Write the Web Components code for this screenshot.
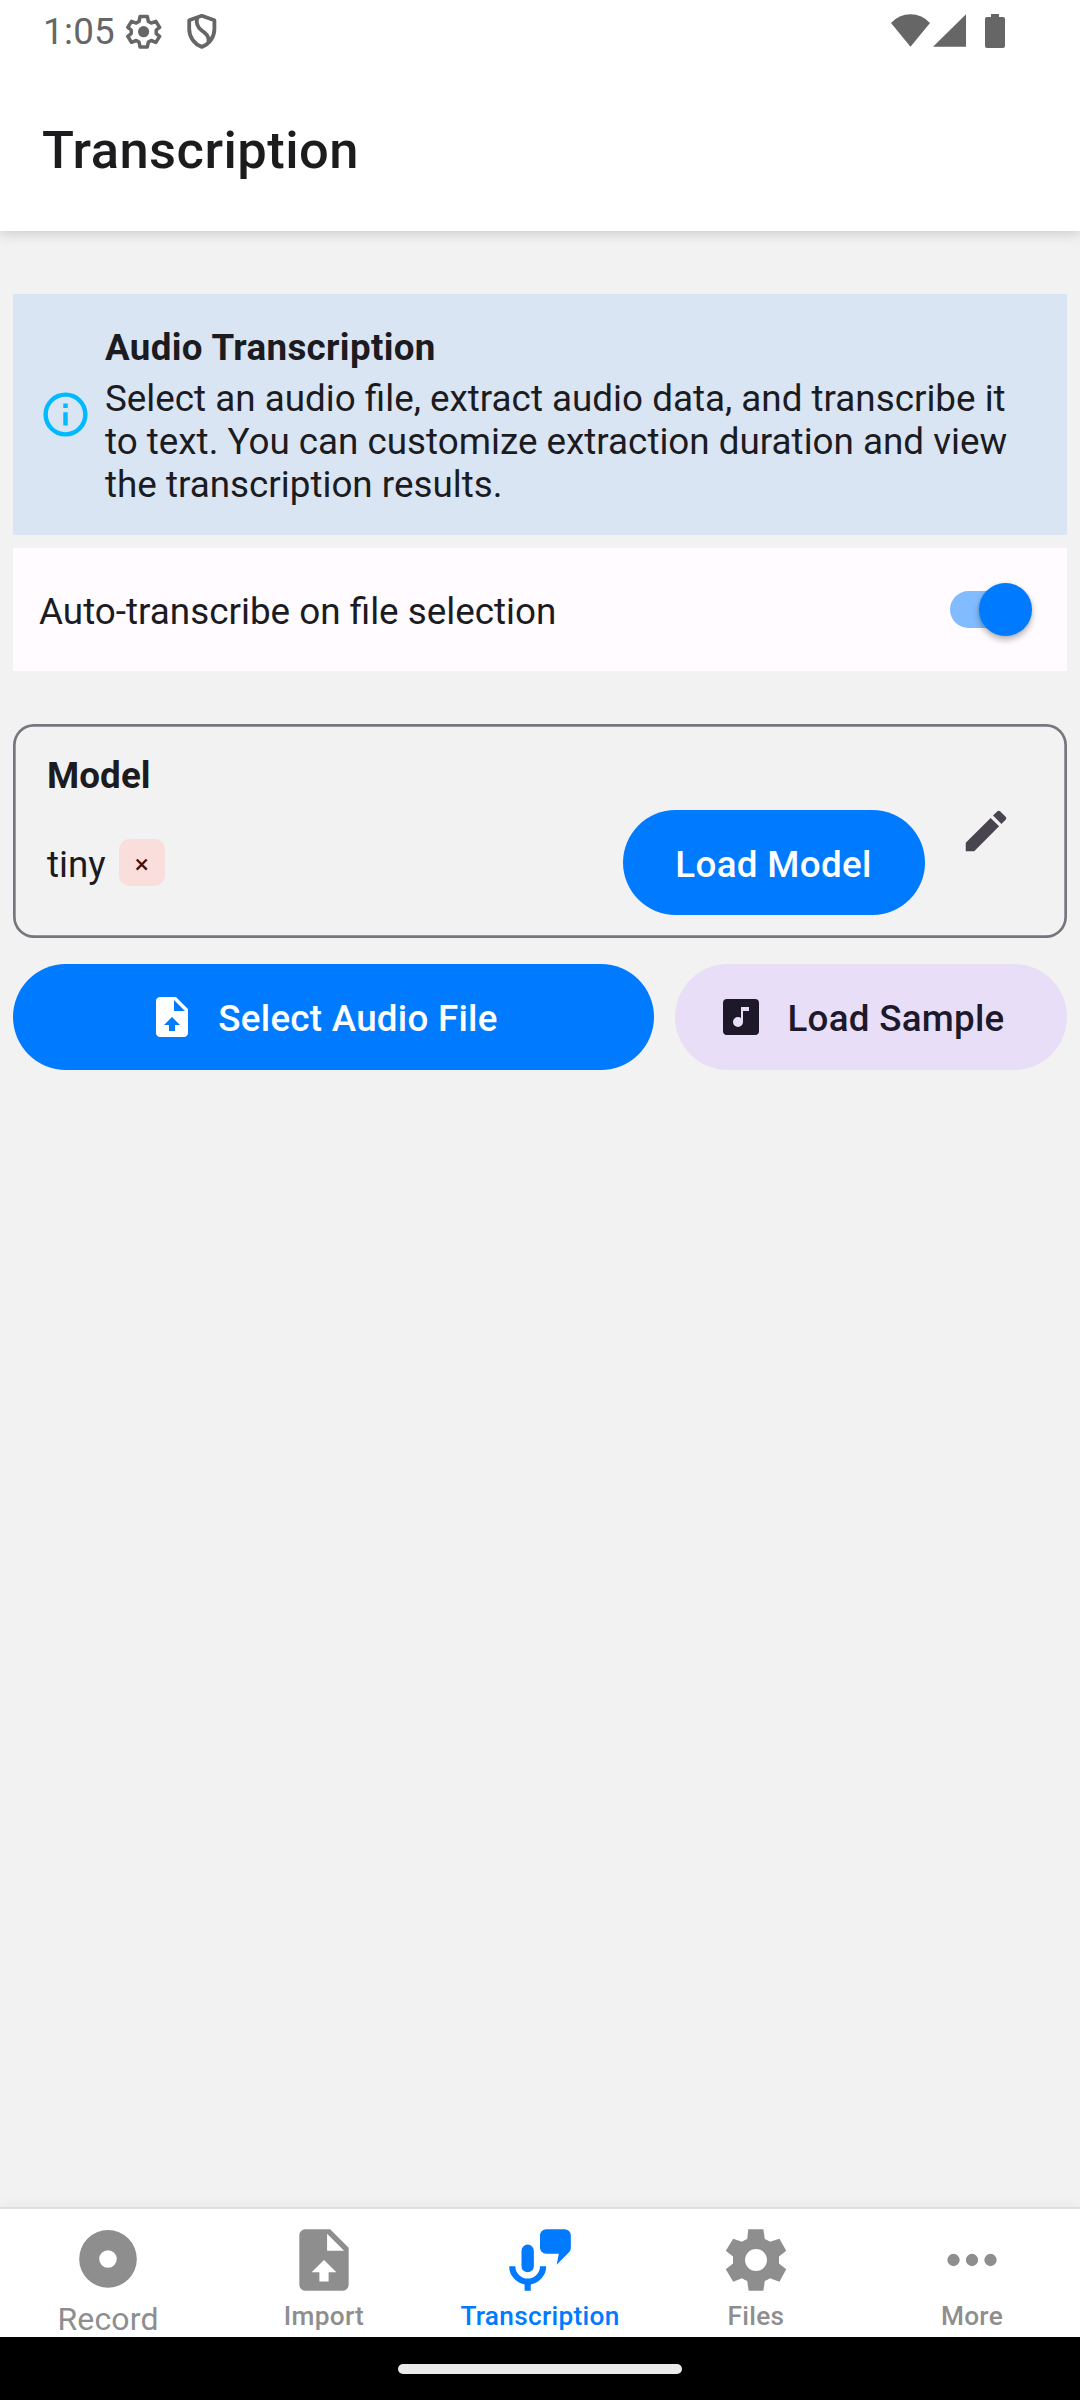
<!DOCTYPE html>
<html lang="en">
<head>
<meta charset="utf-8">
<title>Transcription</title>
<style>
  html, body { margin: 0; padding: 0; }
  body { width: 1080px; height: 2400px; overflow: hidden; background: #f2f2f2; font-family: Roboto, sans-serif; color: #1c1b1f; }
</style>
</head>
<body>
<transcription-app></transcription-app>
<script>
const define = (name, css, html) => customElements.define(name, class extends HTMLElement {
  constructor() {
    super();
    const t = document.createElement('template');
    t.innerHTML = `<style>*{box-sizing:border-box}${css}</style>${html}`;
    this.attachShadow({ mode: 'open' }).append(t.content.cloneNode(true));
  }
});

const GEAR = 'M9.5 2H14.4L14.85 5.2Q15.75 5.6 16.55 6.1L19.6 5.1L21.8 9L19.45 10.85V13.15L21.8 15L19.6 19.05L16.55 17.9Q15.75 18.5 14.85 18.8L14.4 22H9.6L9.15 18.8Q8.25 18.5 7.45 17.9L4.6 19.05L2.2 15L4.55 13.15V10.85L2.2 9L4.6 5.1L7.45 6.1Q8.25 5.6 9.15 5.2ZM12 8.45A3.55 3.55 0 1 0 12 15.55A3.55 3.55 0 1 0 12 8.45Z';
const ICONS = {
  info: 'M11 9H13V7H11M12 20C7.59 20 4 16.41 4 12S7.59 4 12 4 20 7.59 20 12 16.41 20 12 20M12 2A10 10 0 0 0 2 12A10 10 0 0 0 12 22A10 10 0 0 0 22 12A10 10 0 0 0 12 2M11 17H13V11H11V17Z',
  pencil: 'M20.71 7.04C21.1 6.65 21.1 6 20.71 5.63L18.37 3.29C18 2.9 17.35 2.9 16.96 3.29L15.12 5.12L18.87 8.87M3 17.25V21H6.75L17.81 9.93L14.06 6.18L3 17.25Z',
  upload: 'M14 2H6C4.89 2 4 2.89 4 4V20C4 21.11 4.89 22 6 22H18C19.11 22 20 21.11 20 20V8L14 2M13.5 16V19H10.5V16H8L12 12L16 16H13.5M13 9V3.5L18.5 9H13Z',
  music: 'M16 9H13V14.5A2.5 2.5 0 0 1 10.5 17A2.5 2.5 0 0 1 8 14.5A2.5 2.5 0 0 1 10.5 12C11.07 12 11.58 12.19 12 12.5V7H16M19 3H5A2 2 0 0 0 3 5V19A2 2 0 0 0 5 21H19A2 2 0 0 0 21 19V5A2 2 0 0 0 19 3Z',
  record: 'M12 2.3A9.35 9.35 0 1 0 12 21A9.35 9.35 0 1 0 12 2.3ZM12 8.8A2.85 2.85 0 1 1 12 14.5A2.85 2.85 0 1 1 12 8.8Z',
  mic: 'M8 7A2 2 0 0 1 10 9V14A2 2 0 0 1 6 14V9A2 2 0 0 1 8 7M14 14A6 6 0 0 1 9 19.92V22H7V19.92A6 6 0 0 1 2 14H4A4 4 0 0 0 12 14H14M20 2H14A2 2 0 0 0 12 4V8A2 2 0 0 0 14 10H18.1L17.4 13.5L21.4 9.45C21.8 9.1 22 8.6 22 8V4A2 2 0 0 0 20 2Z',
  gear: GEAR,
  dots: 'M16 12A2 2 0 0 1 18 10A2 2 0 0 1 20 12A2 2 0 0 1 18 14A2 2 0 0 1 16 12M10 12A2 2 0 0 1 12 10A2 2 0 0 1 14 12A2 2 0 0 1 12 14A2 2 0 0 1 10 12M4 12A2 2 0 0 1 6 10A2 2 0 0 1 8 12A2 2 0 0 1 6 14A2 2 0 0 1 4 12Z'
};
customElements.define('app-icon', class extends HTMLElement {
  connectedCallback() {
    const s = this.getAttribute('size');
    this.attachShadow({ mode: 'open' }).innerHTML =
      `<style>:host{display:block;flex:none;width:${s}px;height:${s}px}svg{display:block}</style>
       <svg width="${s}" height="${s}" viewBox="0 0 24 24" fill="currentColor" fill-rule="evenodd"><path d="${ICONS[this.getAttribute('name')]}"/></svg>`;
  }
});

define('status-bar', `
  :host{display:flex;height:62px;padding:0 0 0 43px;background:#fff;color:#666;font-size:36.75px;line-height:64px}
  .time{width:83px;letter-spacing:.3px}
  svg{display:block}
  .spacer{flex:1}
`, `
  <span class="time">1:05</span>
  <svg width="100" height="62" viewBox="0 0 100 62" fill="none" stroke="#666" stroke-width="3.5" stroke-linejoin="round">
    <path d="M14.1 16.5h7.2l1.1 5 2.8 1.6 4.7-1.8 3.7 6-3.4 2.7v3.6l3.4 2.7-3.7 6-4.7-1.8-2.8 1.6-1.1 4.9h-7.2l-1.1-4.9-2.8-1.6-4.7 1.8-3.7-6 3.4-2.7v-3.6l-3.4-2.7 3.7-6 4.7 1.8 2.8-1.6z"/>
    <circle cx="17.6" cy="31.7" r="5.6" fill="#666" stroke="none"/>
    <path stroke-width="3.8" d="M75.8 15.8L88.4 20.3V29C88.4 37 83.5 44 75.8 46.9C68.1 44 63.2 37 63.2 29V20.3Z"/>
    <path stroke-width="3.8" d="M71.2 18C69.8 23.5 71.5 27.2 75.5 30.3C81 34.5 83.5 37 82.4 42"/>
  </svg>
  <span class="spacer"></span>
  <svg width="190" height="62" viewBox="890 0 190 62" fill="#666">
    <path d="M891 23Q899 14.3 910.5 14.3T930 23L910.5 46.7Z"/>
    <path d="M966 14.2V46.7H933Z"/>
    <path d="M991 14h8v3h4a2 2 0 0 1 2 2v27a2 2 0 0 1-2 2h-16a2 2 0 0 1-2-2V19a2 2 0 0 1 2-2h4z"/>
  </svg>
`);

define('app-header', `
  :host{display:flex;align-items:center;height:169px;padding:6px 42px 0;background:#fff;font-size:52.5px;font-weight:500;line-height:62px;letter-spacing:.45px;color:#1c1c1e}
`, `<slot></slot>`);

define('info-card', `
  :host{display:flex;align-items:center;height:241px;padding:0 26px;background:#d9e5f3;gap:13px}
  app-icon{color:#00baff}
  .title{font-size:36.75px;font-weight:700;line-height:54px;letter-spacing:.33px;margin-bottom:2px;white-space:nowrap}
  .body{font-size:36.8px;line-height:43px;white-space:nowrap}
  .col{margin-top:-2px}
`, `<app-icon name="info" size="53"></app-icon><div class="col"><div class="title"><slot name="title"></slot></div><div class="body"><slot></slot></div></div>`);

define('toggle-switch', `
  :host{display:flex;align-items:center;width:83px;height:53px}
  .track{width:76px;height:37px;border-radius:19px;background:#80bcff;margin-left:1px}
  .thumb{flex:none;width:53px;height:53px;border-radius:50%;background:#007aff;margin-left:-47px;box-shadow:0 4px 6px rgba(0,0,0,.28),0 0 3px rgba(0,0,0,.12)}
`, `<div class="track"></div><div class="thumb"></div>`);

define('setting-row', `
  :host{display:flex;align-items:center;justify-content:space-between;height:123px;margin-top:13px;padding:0 35px 0 26px;background:#fffbff;font-size:36.85px;line-height:52px}
  span{padding-top:4px}
`, `<span><slot></slot></span><toggle-switch></toggle-switch>`);

define('pill-button', `
  :host{display:flex;align-items:center;justify-content:center;height:105px;border-radius:53px;background:#007bff;color:#fff;font-size:36.75px;font-weight:500;letter-spacing:.26px;line-height:52px;white-space:nowrap}
  span{padding-top:3px}
`, `<slot name="icon"></slot><span><slot></slot></span>`);

define('model-card', `
  :host{display:flex;height:214px;margin-top:53px;box-shadow:inset 0 0 0 2.7px #79747e;border-radius:21px;padding:2px 2px 2px 34px;font-size:36.75px;line-height:52px}
  .main{flex:1;display:flex;flex-direction:column;padding-top:23.5px}
  .label{font-weight:700;letter-spacing:.1px}
  .row{display:flex;align-items:center;height:105px;margin-top:8.5px}
  .name{padding-top:5px}
  .chip{display:flex;align-items:center;justify-content:center;width:46px;height:47px;margin-left:13px;border-radius:10.5px;background:#f9dedc;color:#410e0b;font-size:26.25px;line-height:47px}
  .chip span{padding-top:4px}
  pill-button{width:302px;margin-left:auto;padding-top:2px;letter-spacing:.34px}
  app-icon{color:#49454f;margin:78px 52px 0 34.5px}
`, `<div class="main"><div class="label">Model</div><div class="row"><span class="name">tiny</span><div class="chip"><span>×</span></div><pill-button>Load Model</pill-button></div></div><app-icon name="pencil" size="54"></app-icon>`);

define('action-row', `
  :host{display:flex;gap:21px;margin-top:26px}
  pill-button{height:106px}
  .a{flex:1;padding-right:21px}
  .b{width:392px;background:#e8def8;color:#1d192b;padding-right:21px}
  .a app-icon{margin-right:22px}
  .b app-icon{margin-right:23px}
`, `<pill-button class="a"><app-icon slot="icon" name="upload" size="48"></app-icon>Select Audio File</pill-button><pill-button class="b"><app-icon slot="icon" name="music" size="48"></app-icon>Load Sample</pill-button>`);

define('tab-item', `
  :host{flex:1;display:flex;flex-direction:column;align-items:center;color:#8e8e8f;font-size:26.25px;font-weight:500;line-height:32px;letter-spacing:.28px;padding-top:14px}
  :host([active]){color:#007aff}
  :host([large]){font-size:32px;font-weight:400;line-height:38px;letter-spacing:.15px}
  span{margin-top:2.5px}
`, `<slot name="icon"></slot><span><slot></slot></span>`);

define('tab-bar', `
  :host{display:flex;height:130px;background:#fff;border-top:2px solid #dfdfdf;box-shadow:0 -3px 12px rgba(0,0,0,.04)}
`, `<slot></slot>`);

define('system-nav', `
  :host{display:flex;align-items:center;justify-content:center;height:63px;background:#000}
  div{width:284px;height:10px;border-radius:5px;background:#ebebeb}
`, `<div></div>`);

define('transcription-app', `
  :host{display:flex;flex-direction:column;width:1080px;height:2400px;background:#f2f2f2}
  .top{flex:none;position:relative;box-shadow:0 1px 14px rgba(0,0,0,.2);clip-path:inset(0 0 -30px 0)}
  main{flex:1;padding:63px 13px 0}
`, `
  <div class="top"><status-bar></status-bar><app-header>Transcription</app-header></div>
  <main>
    <info-card><span slot="title">Audio Transcription</span>Select an audio file, extract audio data, and transcribe it<br>to text. You can customize extraction duration and view<br>the transcription results.</info-card>
    <setting-row>Auto-transcribe on file selection</setting-row>
    <model-card></model-card>
    <action-row></action-row>
  </main>
  <tab-bar>
    <tab-item large><app-icon slot="icon" name="record" size="74"></app-icon>Record</tab-item>
    <tab-item><app-icon slot="icon" name="upload" size="74"></app-icon>Import</tab-item>
    <tab-item active><app-icon slot="icon" name="mic" size="74"></app-icon>Transcription</tab-item>
    <tab-item><app-icon slot="icon" name="gear" size="74"></app-icon>Files</tab-item>
    <tab-item><app-icon slot="icon" name="dots" size="74"></app-icon>More</tab-item>
  </tab-bar>
  <system-nav></system-nav>
`);
</script>
</body>
</html>
